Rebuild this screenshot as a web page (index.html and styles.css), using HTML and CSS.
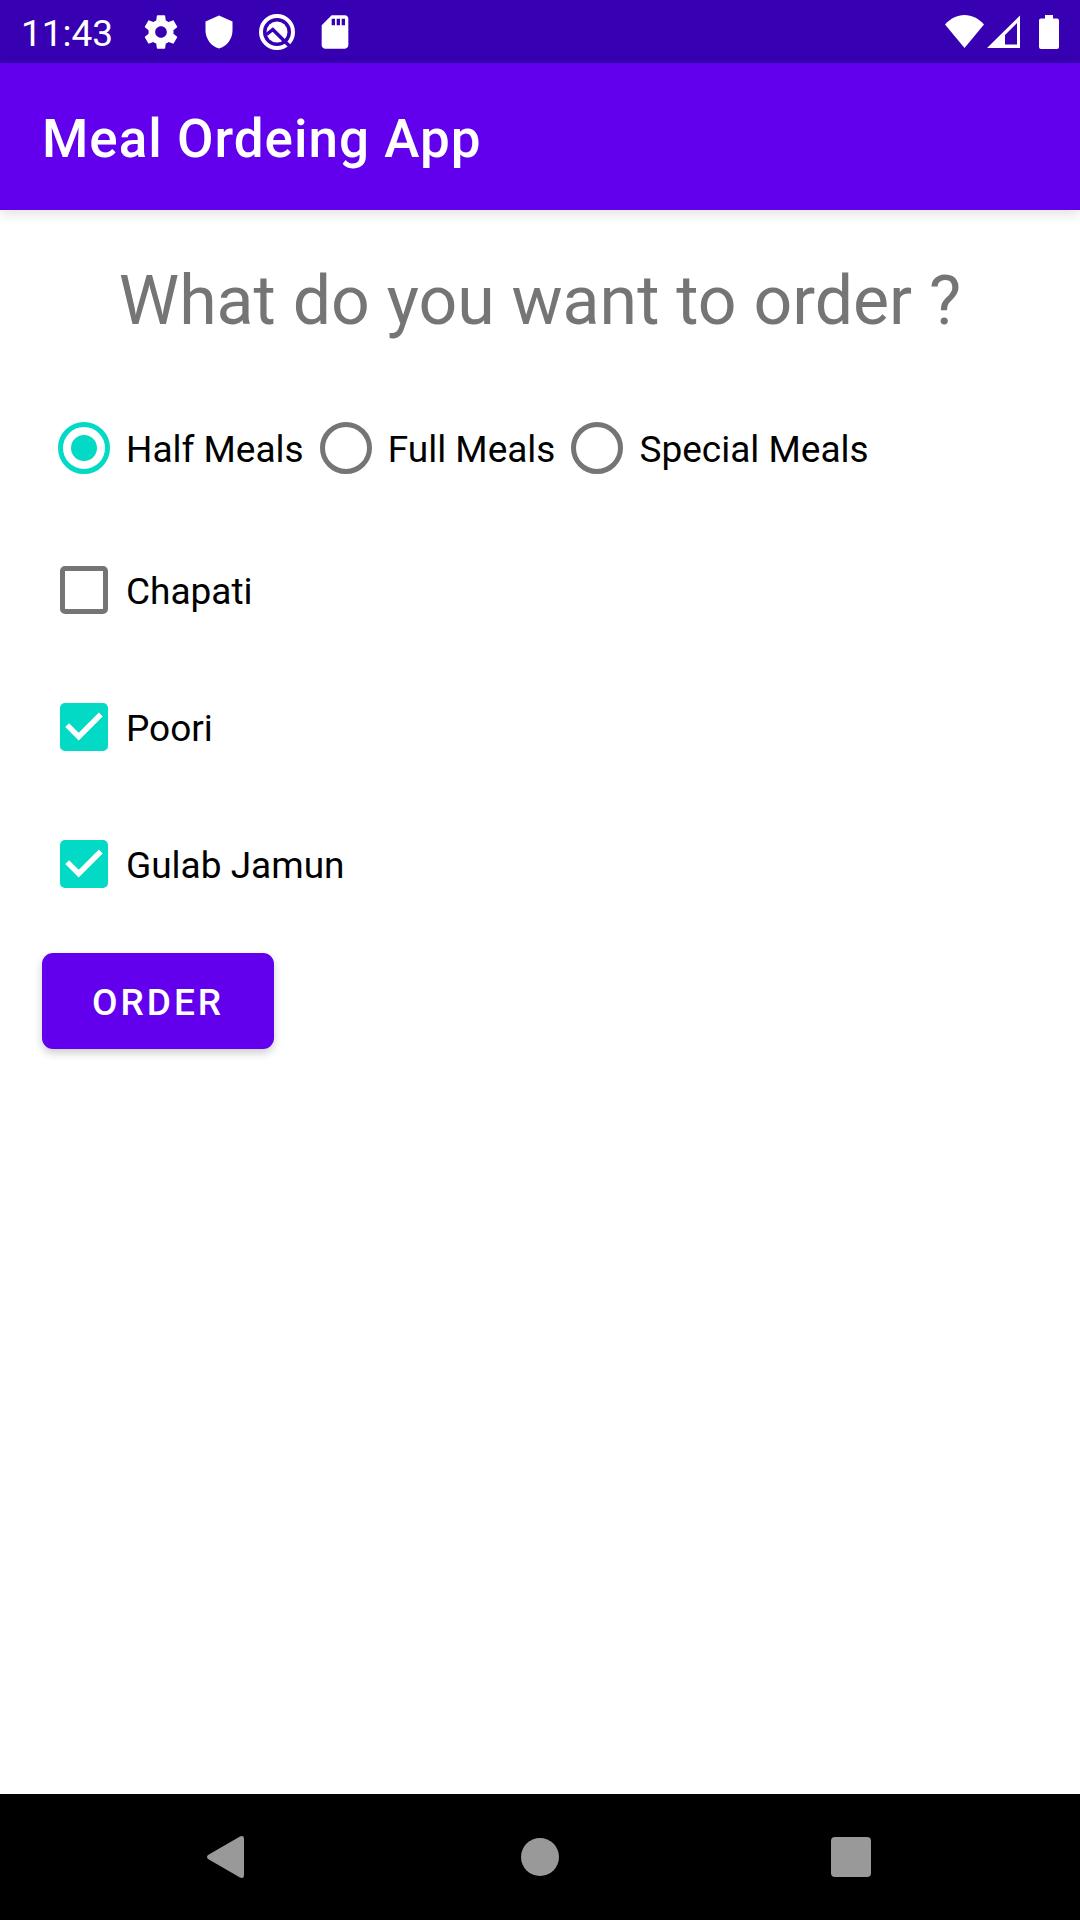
FILE: index.html
```html
<!DOCTYPE html>
<html lang="en">
<head>
<meta charset="utf-8">
<meta name="viewport" content="width=device-width, initial-scale=1">
<title>Meal Ordeing App</title>
<link rel="stylesheet" href="styles.css">
</head>
<body>
<div class="screen">
  <div class="status-bar">
    <span class="clock">11:43</span>
    <div class="notifications">
      <svg width="40" height="40" viewBox="0 0 24 24" fill="currentColor" aria-hidden="true"><path d="M19.43 12.98c.04-.32.07-.64.07-.98s-.03-.66-.07-.98l2.11-1.65c.19-.15.24-.42.12-.64l-2-3.46c-.12-.22-.39-.3-.61-.22l-2.49 1c-.52-.4-1.08-.73-1.69-.98l-.38-2.65C14.46 2.18 14.25 2 14 2h-4c-.25 0-.46.18-.49.42l-.38 2.65c-.61.25-1.17.59-1.69.98l-2.49-1c-.23-.09-.49 0-.61.22l-2 3.46c-.13.22-.07.49.12.64l2.11 1.65c-.04.32-.07.65-.07.98s.03.66.07.98l-2.11 1.65c-.19.15-.24.42-.12.64l2 3.46c.12.22.39.3.61.22l2.49-1c.52.4 1.08.73 1.69.98l.38 2.65c.03.24.24.42.49.42h4c.25 0 .46-.18.49-.42l.38-2.65c.61-.25 1.17-.59 1.69-.98l2.49 1c.23.09.49 0 .61-.22l2-3.46c.12-.22.07-.49-.12-.64l-2.11-1.65zM12 15.5c-1.93 0-3.5-1.57-3.5-3.5s1.57-3.5 3.5-3.5 3.5 1.57 3.5 3.5-1.57 3.5-3.5 3.5z"/></svg>
      <svg width="36" height="36" viewBox="0 0 24 24" fill="currentColor" aria-hidden="true"><path d="M12 1L3 5v6c0 5.55 3.84 10.74 9 12 5.16-1.26 9-6.45 9-12V5l-9-4z"/></svg>
      <svg width="38" height="38" viewBox="0 0 38 38" fill="none" aria-hidden="true">
        <circle cx="19" cy="19" r="16" stroke="currentColor" stroke-width="4"/>
        <circle cx="19" cy="19" r="10.5" fill="currentColor"/>
        <path d="M8.500 21.500L14.800 16.500L32 33.500" stroke="#3700b3" stroke-width="3.500"/>
      </svg>
      <svg width="40" height="40" viewBox="0 0 24 24" fill="currentColor" aria-hidden="true"><path d="M18 2h-8L4.020 8 4 20c0 1.100.9 2 2 2h12c1.100 0 2-.9 2-2V4c0-1.100-.9-2-2-2zm-6 6h-2V4h2v4zm3 0h-2V4h2v4zm3 0h-2V4h2v4z"/></svg>
    </div>
    <div class="system-icons">
      <svg width="39" height="34" viewBox="0 0 39 34" fill="currentColor" aria-hidden="true"><path d="M19.500 33L0 9.500C5.500 3.500 12 0 19.500 0S33.500 3.500 39 9.500Z"/></svg>
      <svg width="33" height="34" viewBox="0 0 33 34" fill="currentColor" fill-rule="evenodd" aria-hidden="true"><path d="M33 .500V33H0ZM30 8L18 20V29.500H30Z"/></svg>
      <svg class="battery" width="20" height="34" viewBox="0 0 20 34" fill="currentColor" aria-hidden="true"><path d="M6 0H14V3.500H18Q20 3.500 20 5.500V32Q20 34 18 34H2Q0 34 0 32V5.500Q0 3.500 2 3.500H6Z"/></svg>
    </div>
  </div>

  <header class="app-bar">
    <h1 class="app-title">Meal Ordeing App</h1>
  </header>

  <main class="content">
    <h2 class="question">What do you want to order ?</h2>
    <form class="order-form">
      <div class="meals" role="radiogroup" aria-label="Meal size">
        <label class="option"><input class="radio" type="radio" name="meal" checked><span class="option-text">Half Meals</span></label>
        <label class="option"><input class="radio" type="radio" name="meal"><span class="option-text">Full Meals</span></label>
        <label class="option"><input class="radio" type="radio" name="meal"><span class="option-text">Special Meals</span></label>
      </div>
      <div class="extras">
        <label class="option"><input class="check" type="checkbox" name="chapati"><span class="option-text">Chapati</span></label>
        <label class="option"><input class="check" type="checkbox" name="poori" checked><span class="option-text">Poori</span></label>
        <label class="option"><input class="check" type="checkbox" name="gulab-jamun" checked><span class="option-text">Gulab Jamun</span></label>
      </div>
      <button class="order-button" type="button">ORDER</button>
    </form>
  </main>

  <nav class="nav-bar" aria-label="System">
    <button class="nav-button" type="button" aria-label="Back"><svg width="84" height="84" viewBox="0 0 84 84" fill="#999"><path d="M22 40L54 21.500Q58 20 58 24V60Q58 64 54 62.500L22 44Q20 42 22 40Z"/></svg></button>
    <button class="nav-button" type="button" aria-label="Home"><svg width="84" height="84" viewBox="0 0 84 84" fill="#999"><circle cx="42" cy="42" r="19"/></svg></button>
    <button class="nav-button" type="button" aria-label="Overview"><svg width="84" height="84" viewBox="0 0 84 84" fill="#999"><rect x="21" y="22" width="40" height="40" rx="4"/></svg></button>
  </nav>
</div>
</body>
</html>
```

FILE: styles.css
```css
* {
  box-sizing: border-box;
}

body {
  margin: 0;
  background: #fff;
  color: #000;
  font-family: Roboto, "Noto Sans", sans-serif;
  font-size: 37px;
  line-height: 44px;
}

.screen {
  display: flex;
  flex-direction: column;
  min-height: 100vh;
}

.status-bar {
  display: flex;
  align-items: center;
  height: 63px;
  padding: 0 21px;
  background: #3700b3;
  color: #fff;
}

.clock {
  width: 111px;
  padding-top: 4px;
}

.notifications {
  display: grid;
  grid-template-columns: repeat(4, 58px);
  align-items: center;
  justify-items: center;
}

.system-icons {
  display: flex;
  align-items: center;
  gap: 3px;
  margin-left: auto;
}

.battery {
  margin-left: 16px;
}

.app-bar {
  display: flex;
  align-items: center;
  height: 147px;
  padding: 4px 42px 0;
  background: #6200ee;
  color: #fff;
  box-shadow: 0 4px 12px rgba(0, 0, 0, 0.12);
}

.app-title {
  margin: 0;
  font-size: 53px;
  font-weight: 500;
  line-height: 62px;
  letter-spacing: 1px;
}

.content {
  flex: 1;
  padding: 42px;
}

.question {
  margin: 0;
  padding-top: 3px;
  color: #757575;
  font-size: 68px;
  font-weight: 400;
  line-height: 92px;
  text-align: center;
}

.order-form {
  padding-top: 38px;
}

.meals {
  display: flex;
}

.option {
  display: flex;
  align-items: center;
  height: 126px;
}

.option-text {
  padding-top: 4px;
}

.extras {
  display: grid;
  gap: 11px;
  justify-items: start;
  padding: 16px 0 26px;
}

.radio,
.check {
  flex: none;
  display: grid;
  appearance: none;
  border: 5px solid #757575;
}

.radio {
  width: 52px;
  height: 52px;
  margin: 0 16px;
  place-items: center;
  border-radius: 50%;
}

.radio:checked {
  border-color: #03dac5;
}

.radio:checked::before {
  content: "";
  width: 26px;
  height: 26px;
  border-radius: 50%;
  background: #03dac5;
}

.check {
  width: 48px;
  height: 48px;
  margin: 0 18px;
  border-radius: 5px;
}

.check:checked {
  border: 0;
  background: #03dac5;
}

.check:checked::before {
  content: "";
  background: #fff;
  clip-path: polygon(39% 78%, 11% 50%, 19% 42%, 39% 62%, 81% 20%, 89% 28%);
}

.order-button {
  height: 96px;
  padding: 3px 50px 0;
  border: 0;
  border-radius: 11px;
  background: #6200ee;
  color: #fff;
  font: 500 37px/44px Roboto, "Noto Sans", sans-serif;
  letter-spacing: 3px;
  box-shadow: 0 4px 8px rgba(0, 0, 0, 0.2);
}

.nav-bar {
  display: grid;
  grid-template-columns: repeat(3, 1fr);
  height: 126px;
  padding: 0 72px;
  background: #000;
}

.nav-button {
  display: grid;
  place-items: center;
  padding: 0;
  border: 0;
  background: none;
}
```
